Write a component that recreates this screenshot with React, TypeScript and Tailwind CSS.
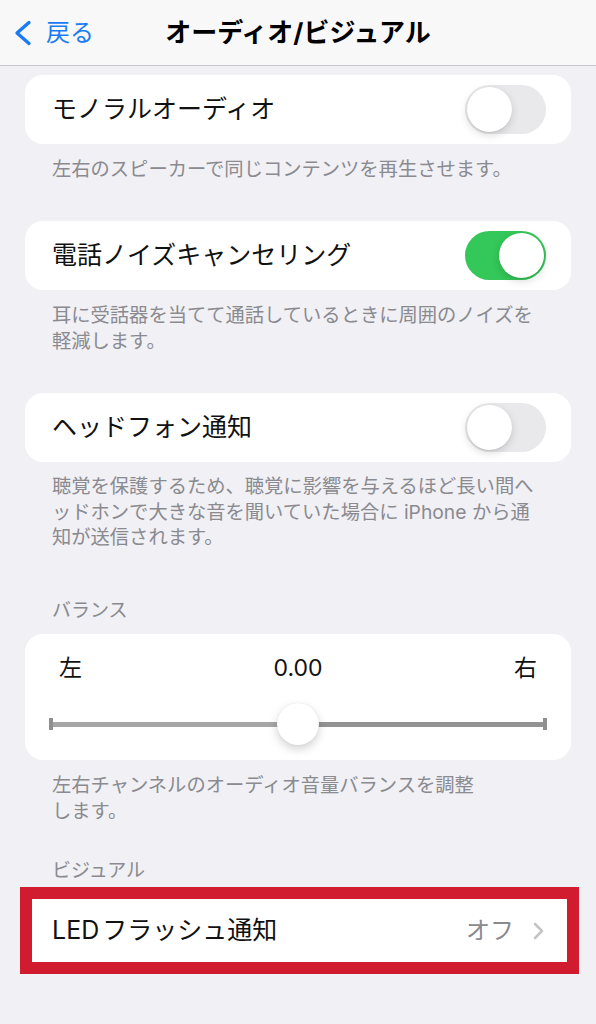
import type { ReactNode } from "react";

const font = "font-['Inter','Noto_Sans_CJK_JP',sans-serif]";

function Toggle({ on }: { on: boolean }) {
  return (
    <div
      className={`relative h-[49px] w-[81px] shrink-0 rounded-full ${on ? "bg-[#34c759]" : "bg-[#e9e9eb]"}`}
    >
      <div
        className={`absolute top-[2px] h-[45px] w-[45px] rounded-full bg-white shadow-[0_3px_8px_rgba(0,0,0,0.15),0_1px_1px_rgba(0,0,0,0.08)] ${on ? "right-[2px]" : "left-[2px]"}`}
      />
    </div>
  );
}

function ToggleCard({ label, on }: { label: string; on: boolean }) {
  return (
    <div className="mx-[25px] flex h-[69px] items-center justify-between rounded-[18px] bg-white pl-[27px] pr-[25px]">
      <span className="text-[25px] text-[#111]">{label}</span>
      <Toggle on={on} />
    </div>
  );
}

function Footer({ lines, leading = "leading-[26px]" }: { lines: string[]; leading?: string }) {
  return (
    <div className={`px-[52px] pt-[12px] text-[19.3px] text-[#8a8a8f] ${leading}`}>
      {lines.map((line) => (
        <span key={line} className="block whitespace-nowrap">
          {line}
        </span>
      ))}
    </div>
  );
}

function SectionHeader({ children, className }: { children: ReactNode; className: string }) {
  return (
    <p className={`px-[52px] text-[19px] leading-[26px] text-[#8a8a8f] ${className}`}>{children}</p>
  );
}

export default function App() {
  return (
    <div className={`min-h-[1024px] w-full bg-[#f0f0f5] ${font}`}>
      <header className="grid h-[66px] grid-cols-[1fr_auto_1fr] items-center border-b border-[#c8c8cc] bg-[#f8f8f8]">
        <div className="flex items-center pl-[13px] text-[#1a7cf4]">
          <svg width="20" height="26" viewBox="0 0 20 26" fill="none">
            <path
              d="M16 2.5 L4 13 L16 23.5"
              stroke="currentColor"
              strokeWidth="3.4"
              strokeLinecap="round"
              strokeLinejoin="round"
            />
          </svg>
          <span className="ml-[13px] text-[24px]">戻る</span>
        </div>
        <h1 className="text-[26px] font-bold text-black">オーディオ/ビジュアル</h1>
        <div />
      </header>

      <div className="pt-[9px]">
        <ToggleCard label="モノラルオーディオ" on={false} />
        <Footer lines={["左右のスピーカーで同じコンテンツを再生させます。"]} />

        <div className="mt-[39px]">
          <ToggleCard label="電話ノイズキャンセリング" on />
        </div>
        <Footer lines={["耳に受話器を当てて通話しているときに周囲のノイズを", "軽減します。"]} />

        <div className="mt-[39px]">
          <ToggleCard label="ヘッドフォン通知" on={false} />
        </div>
        <Footer
          leading="leading-[25.5px]"
          lines={[
            "聴覚を保護するため、聴覚に影響を与えるほど長い間へ",
            "ッドホンで大きな音を聞いていた場合に iPhone から通",
            "知が送信されます。",
          ]}
        />

        <SectionHeader className="mt-[47px]">バランス</SectionHeader>
        <div className="mx-[25px] mt-[10.5px] h-[126px] rounded-[18px] bg-white pt-[21px]">
          <div className="grid grid-cols-3 items-center px-[34px] text-[23px] leading-[26px] text-[#111]">
            <span>左</span>
            <span className="text-center">0.00</span>
            <span className="text-right">右</span>
          </div>
          <div className="relative mx-[24px] mt-[22px] flex h-[42px] items-center">
            <div className="h-[12px] w-[4px] bg-[#8f8f8f]" />
            <div className="h-[5px] flex-1 bg-[#a6a6a6]" />
            <div className="h-[5px] flex-1 bg-[#939393]" />
            <div className="h-[12px] w-[4px] bg-[#8f8f8f]" />
            <div className="absolute left-1/2 top-0 h-[42px] w-[42px] -translate-x-1/2 rounded-full bg-white shadow-[0_4px_10px_rgba(0,0,0,0.18),0_0_1px_rgba(0,0,0,0.12)]" />
          </div>
        </div>
        <Footer lines={["左右チャンネルのオーディオ音量バランスを調整", "します。"]} />

        <SectionHeader className="mt-[34px]">ビジュアル</SectionHeader>
        <div className="ml-[20px] mr-[17px] mt-[3px] border-[12px] border-[#d11c2f] bg-white">
          <div className="flex h-[63px] items-center justify-between pl-[20px] pr-[22px]">
            <span className="text-[25px] text-[#111]">
              LED<span className="ml-[3px]">フラッシュ通知</span>
            </span>
            <div className="flex items-center gap-[18px]">
              <span className="text-[24px] text-[#8a8a8f]">オフ</span>
              <svg width="13" height="20" viewBox="0 0 13 20" fill="none">
                <path
                  d="M3 3 L10 10 L3 17"
                  stroke="#c4c4c7"
                  strokeWidth="2.6"
                  strokeLinecap="round"
                  strokeLinejoin="round"
                />
              </svg>
            </div>
          </div>
        </div>
      </div>
    </div>
  );
}
